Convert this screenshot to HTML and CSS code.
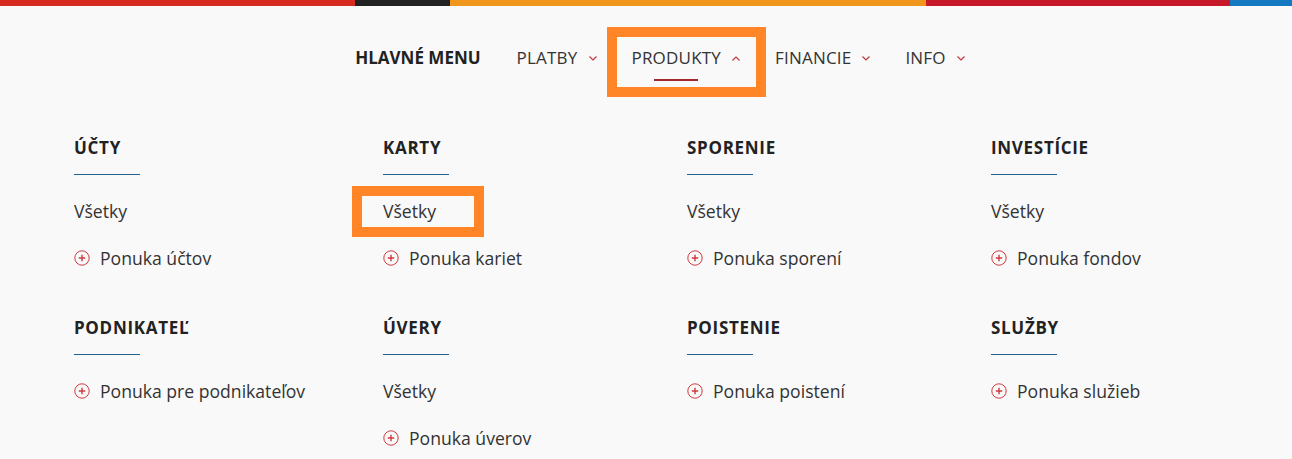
FILE: index.html
```html
<!DOCTYPE html>
<html lang="sk">
<head>
    <meta charset="UTF-8">
    <meta name="viewport" content="width=device-width, initial-scale=1.0">
    <title>Hlavné menu</title>
    <link rel="stylesheet" href="styles.css">
</head>
<body>
    <div class="stripe">
        <span class="stripe-red"></span>
        <span class="stripe-black"></span>
        <span class="stripe-orange"></span>
        <span class="stripe-crimson"></span>
        <span class="stripe-blue"></span>
    </div>

    <nav class="main-nav">
        <span class="nav-title">HLAVNÉ MENU</span>
        <a href="#" class="nav-item">
            <span class="nav-label">PLATBY</span>
            <svg class="chevron" width="8" height="5" viewBox="0 0 8 5"><path d="M0.5 0.5 L4 4 L7.5 0.5" /></svg>
        </a>
        <a href="#" class="nav-item is-open marked">
            <span class="nav-label">PRODUKTY</span>
            <svg class="chevron" width="8" height="5" viewBox="0 0 8 5"><path d="M0.5 4.5 L4 1 L7.5 4.5" /></svg>
        </a>
        <a href="#" class="nav-item">
            <span class="nav-label">FINANCIE</span>
            <svg class="chevron" width="8" height="5" viewBox="0 0 8 5"><path d="M0.5 0.5 L4 4 L7.5 0.5" /></svg>
        </a>
        <a href="#" class="nav-item">
            <span class="nav-label">INFO</span>
            <svg class="chevron" width="8" height="5" viewBox="0 0 8 5"><path d="M0.5 0.5 L4 4 L7.5 0.5" /></svg>
        </a>
    </nav>

    <div class="menu-grid">
        <section class="menu-col">
            <h3 class="menu-head">ÚČTY</h3>
            <ul class="menu-list">
                <li><a href="#">Všetky</a></li>
                <li class="offer"><svg class="plus" width="16" height="16" viewBox="0 0 16 16"><circle cx="8" cy="8" r="7.2" /><path d="M8 4.8 V11.2 M4.8 8 H11.2" /></svg><a href="#">Ponuka účtov</a></li>
            </ul>
        </section>
        <section class="menu-col">
            <h3 class="menu-head">KARTY</h3>
            <ul class="menu-list">
                <li class="marked"><a href="#">Všetky</a></li>
                <li class="offer"><svg class="plus" width="16" height="16" viewBox="0 0 16 16"><circle cx="8" cy="8" r="7.2" /><path d="M8 4.8 V11.2 M4.8 8 H11.2" /></svg><a href="#">Ponuka kariet</a></li>
            </ul>
        </section>
        <section class="menu-col">
            <h3 class="menu-head">SPORENIE</h3>
            <ul class="menu-list">
                <li><a href="#">Všetky</a></li>
                <li class="offer"><svg class="plus" width="16" height="16" viewBox="0 0 16 16"><circle cx="8" cy="8" r="7.2" /><path d="M8 4.8 V11.2 M4.8 8 H11.2" /></svg><a href="#">Ponuka sporení</a></li>
            </ul>
        </section>
        <section class="menu-col">
            <h3 class="menu-head">INVESTÍCIE</h3>
            <ul class="menu-list">
                <li><a href="#">Všetky</a></li>
                <li class="offer"><svg class="plus" width="16" height="16" viewBox="0 0 16 16"><circle cx="8" cy="8" r="7.2" /><path d="M8 4.8 V11.2 M4.8 8 H11.2" /></svg><a href="#">Ponuka fondov</a></li>
            </ul>
        </section>

        <section class="menu-col">
            <h3 class="menu-head">PODNIKATEĽ</h3>
            <ul class="menu-list">
                <li class="offer"><svg class="plus" width="16" height="16" viewBox="0 0 16 16"><circle cx="8" cy="8" r="7.2" /><path d="M8 4.8 V11.2 M4.8 8 H11.2" /></svg><a href="#">Ponuka pre podnikateľov</a></li>
            </ul>
        </section>
        <section class="menu-col">
            <h3 class="menu-head">ÚVERY</h3>
            <ul class="menu-list">
                <li><a href="#">Všetky</a></li>
                <li class="offer"><svg class="plus" width="16" height="16" viewBox="0 0 16 16"><circle cx="8" cy="8" r="7.2" /><path d="M8 4.8 V11.2 M4.8 8 H11.2" /></svg><a href="#">Ponuka úverov</a></li>
            </ul>
        </section>
        <section class="menu-col">
            <h3 class="menu-head">POISTENIE</h3>
            <ul class="menu-list">
                <li class="offer"><svg class="plus" width="16" height="16" viewBox="0 0 16 16"><circle cx="8" cy="8" r="7.2" /><path d="M8 4.8 V11.2 M4.8 8 H11.2" /></svg><a href="#">Ponuka poistení</a></li>
            </ul>
        </section>
        <section class="menu-col">
            <h3 class="menu-head">SLUŽBY</h3>
            <ul class="menu-list">
                <li class="offer"><svg class="plus" width="16" height="16" viewBox="0 0 16 16"><circle cx="8" cy="8" r="7.2" /><path d="M8 4.8 V11.2 M4.8 8 H11.2" /></svg><a href="#">Ponuka služieb</a></li>
            </ul>
        </section>
    </div>
</body>
</html>
```

FILE: styles.css
```css
*,
*::before,
*::after {
  box-sizing: border-box;
}

body {
  margin: 0;
  font-family: "Open Sans", "Noto Sans", sans-serif;
  background-color: #f9f9f9;
  color: #333;
}

a {
  color: inherit;
  text-decoration: none;
}

/* colour stripe at the top */
.stripe {
  display: flex;
  height: 6px;
}

.stripe-red {
  width: 355px;
  background-color: #d72b1f;
}

.stripe-black {
  width: 95px;
  background-color: #222;
}

.stripe-orange {
  width: 476px;
  background-color: #f0961c;
}

.stripe-crimson {
  width: 304px;
  background-color: #c8192a;
}

.stripe-blue {
  flex: 1;
  background-color: #1479c0;
}

/* main navigation */
.main-nav {
  display: flex;
  justify-content: center;
  align-items: center;
  gap: 35px;
  padding: 40px 0 0 28px;
  font-size: 17px;
  line-height: 24px;
}

.nav-title {
  font-weight: 700;
  color: #222;
  margin-right: 1px;
}

.nav-item {
  position: relative;
  display: flex;
  align-items: center;
  gap: 11px;
  color: #333;
}

.nav-label {
  position: relative;
  letter-spacing: 0.2px;
}

.chevron {
  fill: none;
  stroke: #c0393f;
  stroke-width: 1.2;
}

.nav-item.is-open .nav-label::after {
  content: "";
  position: absolute;
  left: 50%;
  top: 33px;
  width: 44px;
  height: 2px;
  margin-left: -22px;
  background-color: #a3282d;
}

/* orange highlight boxes */
.nav-item.marked::before {
  content: "";
  position: absolute;
  left: -25px;
  top: -19px;
  width: 159px;
  height: 70px;
  border: 10px solid #ff8527;
}

.menu-list li.marked {
  position: relative;
}

.menu-list li.marked::before {
  content: "";
  position: absolute;
  left: -31px;
  top: -1px;
  width: 132px;
  height: 51px;
  border: 10px solid #ff8527;
}

/* product columns */
.menu-grid {
  display: grid;
  grid-template-columns: 309px 304px 304px 1fr;
  row-gap: 35px;
  padding: 66px 0 0 74px;
}

.menu-head {
  margin: 0;
  font-size: 17px;
  line-height: 24px;
  font-weight: 700;
  letter-spacing: 0.7px;
  color: #222;
}

.menu-head::after {
  content: "";
  display: block;
  width: 66px;
  height: 1px;
  margin-top: 14px;
  background-color: #23618f;
}

.menu-list {
  list-style: none;
  margin: 12px 0 0;
  padding: 0;
  font-size: 17.6px;
}

.menu-list li {
  display: flex;
  align-items: center;
  gap: 10px;
  height: 47px;
}

.plus {
  flex-shrink: 0;
  fill: none;
  stroke: #cf3a3f;
}

.plus circle {
  stroke-width: 1;
}

.plus path {
  stroke-width: 1.4;
}
```
